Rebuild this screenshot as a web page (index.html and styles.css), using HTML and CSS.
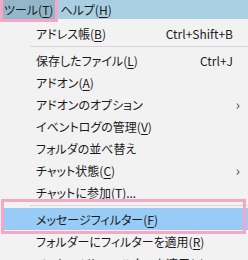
FILE: index.html
```html
<!DOCTYPE html>
<html>
<head>
  <title>ツールメニュー</title>
  <link rel="stylesheet" href="styles.css">
</head>
<body>
  <div class="menubar">
    <span class="top-item active">ツール(<u>T</u>)</span>
    <span class="top-item">ヘルプ(<u>H</u>)</span>
  </div>
  <div class="mark mark-top"></div>

  <div class="menu">
    <div class="item"><span>アドレス帳(<u>B</u>)</span><span class="key">Ctrl+Shift+B</span></div>
    <div class="sep"></div>
    <div class="item"><span>保存したファイル(<u>L</u>)</span><span class="key">Ctrl+J</span></div>
    <div class="item"><span>アドオン(<u>A</u>)</span></div>
    <div class="item"><span>アドオンのオプション</span><span class="arrow">&#x203A;</span></div>
    <div class="item"><span>イベントログの管理(<u>V</u>)</span></div>
    <div class="item"><span>フォルダの並べ替え</span></div>
    <div class="item"><span>チャット状態(<u>C</u>)</span><span class="arrow">&#x203A;</span></div>
    <div class="item"><span>チャットに参加(<u>T</u>)...</span></div>
    <div class="sep"></div>
    <div class="item selected"><span>メッセージフィルター(<u>F</u>)</span></div>
    <div class="item"><span>フォルダーにフィルターを適用(<u>R</u>)</span></div>
    <div class="item"><span>メッセージにフィルターを適用(<u>L</u>)</span></div>
  </div>
  <div class="mark mark-filter"></div>
</body>
</html>
```

FILE: styles.css
```css
body {
  margin: 0;
  width: 248px;
  height: 260px;
  overflow: hidden;
  position: relative;
  background: #f2f2f2;
  font-family: "Noto Sans CJK JP", "Noto Sans", sans-serif;
  font-feature-settings: "palt";
  font-size: 12px;
  color: #1b1b1b;
}

u {
  text-decoration-thickness: 1px;
  text-underline-offset: 2px;
}

.menubar {
  display: flex;
  height: 19px;
  background: #a9d0e2;
  padding-left: 2px;
}

.top-item {
  display: flex;
  align-items: center;
  padding: 0 4px 0 2px;
  line-height: 19px;
}

.top-item.active {
  background: #94b6ca;
  padding-right: 5px;
}

.menu {
  padding-top: 3px;
}

.item {
  display: flex;
  align-items: center;
  justify-content: space-between;
  height: 22px;
  padding: 0 8px 0 33px;
  margin-left: 3px;
}

.item.selected {
  background: #98cbf6;
}

.key {
  padding-right: 7px;
}

.arrow {
  font-size: 14px;
  color: #444;
}

.sep {
  height: 1px;
  background: #d6d6d6;
  margin: 2px 0 2px 30px;
}

/* pink annotation boxes drawn over the menu */
.mark {
  position: absolute;
  border: 3px solid #f4a8c5;
}

.mark-top {
  left: 0;
  top: -3px;
  width: 52px;
  height: 19px;
}

.mark-filter {
  left: 1px;
  top: 199px;
  width: 239px;
  height: 29px;
}
```
